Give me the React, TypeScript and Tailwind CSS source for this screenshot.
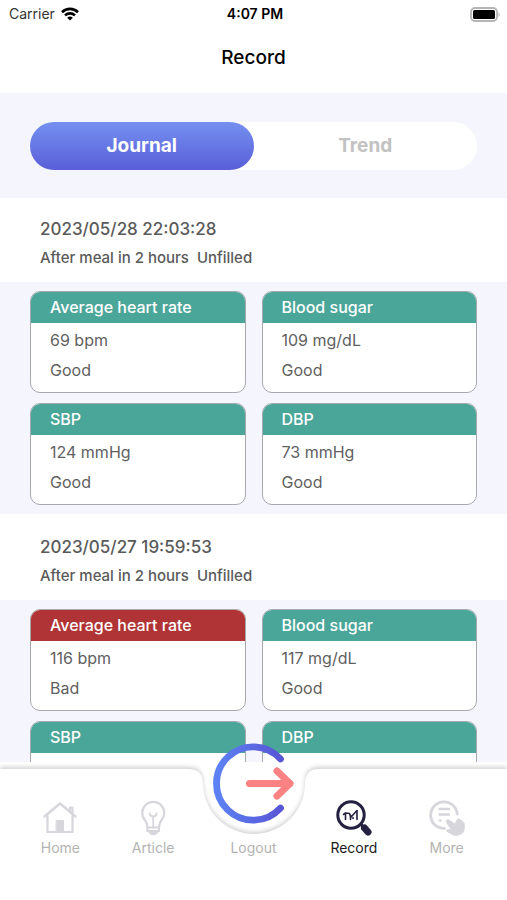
import { useState } from 'react';

type Reading = {
  label: string;
  value?: string;
  status?: 'Good' | 'Bad';
};

type Entry = {
  time: string;
  period: string;
  note: string;
  readings: Reading[];
};

const entries: Entry[] = [
  {
    time: '2023/05/28 22:03:28',
    period: 'After meal in 2 hours',
    note: 'Unfilled',
    readings: [
      { label: 'Average heart rate', value: '69 bpm', status: 'Good' },
      { label: 'Blood sugar', value: '109 mg/dL', status: 'Good' },
      { label: 'SBP', value: '124 mmHg', status: 'Good' },
      { label: 'DBP', value: '73 mmHg', status: 'Good' },
    ],
  },
  {
    time: '2023/05/27 19:59:53',
    period: 'After meal in 2 hours',
    note: 'Unfilled',
    readings: [
      { label: 'Average heart rate', value: '116 bpm', status: 'Bad' },
      { label: 'Blood sugar', value: '117 mg/dL', status: 'Good' },
      { label: 'SBP' },
      { label: 'DBP' },
    ],
  },
];

function WifiIcon() {
  return (
    <svg viewBox="0 0 18 14" className="w-[18px] h-3.5" fill="none" stroke="#000" strokeWidth="2.6">
      <path d="M1 5.2a11.4 11.4 0 0 1 16 0" />
      <path d="M4 8.4a7.2 7.2 0 0 1 10 0" />
      <path d="M9 13.6 6.2 10.8a4 4 0 0 1 5.6 0z" fill="#000" stroke="none" />
    </svg>
  );
}

function BatteryIcon() {
  return (
    <svg viewBox="0 0 31 15" className="w-[31px] h-[15px]" fill="none">
      <rect x="1" y="1" width="26" height="13" rx="4" stroke="#b5b5b5" strokeWidth="1.8" />
      <rect x="3" y="3" width="22" height="9" rx="1.5" fill="#000" />
      <path d="M28.5 5.2c1.6.6 1.6 4 0 4.6z" fill="#b5b5b5" />
    </svg>
  );
}

function HomeIcon() {
  return (
    <svg viewBox="0 0 36 36" className="w-9 h-9" fill="none" stroke="currentColor" strokeWidth="2.2" strokeLinejoin="round" strokeLinecap="round">
      <path d="M5.500 16v16h25V16" />
      <path d="M2.500 16.500 18 3.500l15.500 13" strokeWidth="2.4" />
      <path d="M28 11V7.500h2.500v6" />
      <path d="M14.500 20.500h7V32h-7z" fill="currentColor" strokeWidth="1" />
    </svg>
  );
}

function ArticleIcon() {
  return (
    <svg viewBox="0 0 36 36" className="w-9 h-9" fill="none" stroke="currentColor" strokeWidth="2.2" strokeLinejoin="round" strokeLinecap="round">
      <path d="M12.500 27.500c0-4.500-1.300-5.800-3-8A11 11 0 1 1 27 19.500c-1.700 2.200-3 3.500-3 8z" />
      <path d="M12.500 27.500v3.700h11.500v-3.700" />
      <path d="M15 32.200c.7 2.600 6 2.600 6.700 0z" fill="currentColor" />
      <path d="M18.200 27V16.500M14.800 13.500c.3 2 1.600 3 3.400 3s3.100-1 3.400-3" strokeWidth="1.8" />
    </svg>
  );
}

function RecordIcon() {
  return (
    <svg viewBox="0 0 38 36" className="w-[38px] h-9" fill="none" stroke="#23213f" strokeLinejoin="round" strokeLinecap="round">
      <circle cx="16" cy="15" r="13.2" strokeWidth="3" />
      <path d="m26 24.500 2.500 2.500" strokeWidth="3" />
      <path d="m29.500 28 3.500 4" strokeWidth="7" />
      <path d="M10.500 19.500v-5.500M15.500 19.500v-4M18 18.500v-1M22 19.500v-8.500" strokeWidth="1.6" />
      <path d="m8.500 14.500 2-1.500 4 .5 1.500 3.500 6-6.500" strokeWidth="1.6" />
    </svg>
  );
}

function MoreIcon() {
  return (
    <svg viewBox="0 0 36 36" className="w-9 h-9" fill="none" stroke="currentColor" strokeLinejoin="round" strokeLinecap="round">
      <path d="M15.500 28.400A13.300 13.300 0 1 1 28.200 14" strokeWidth="2.8" />
      <path d="M10.500 9h9.500M10.500 14.500h9.500" strokeWidth="2.4" />
      <path d="M11 20.500h.5" strokeWidth="2.4" />
      <path d="M17.200 21.500c-.4-1.500 1.200-2.600 2.600-1.700l6.200 4 1.500-3.300c.8-1.500 2-2.200 3.500-1.200l3.200 2.700c1.600 1.500 2 3 1.500 5.200l-1 3.800c-.5 1.800-1.500 2.800-3.200 3.200l-3.500 1.300c-1.300.5-2.600.3-3.700-.4l-5.800-3c-1.400-.9-.8-2.500.8-2.600l2.700-.1-4.300-6.500z" fill="currentColor" strokeWidth=".6" />
    </svg>
  );
}

function LogoutIcon() {
  return (
    <svg viewBox="0 0 84 84" className="w-[84px] h-[84px]" fill="none" strokeLinecap="round" strokeLinejoin="round">
      <defs>
        <linearGradient id="logoutRing" x1="0" y1="0" x2="1" y2="0">
          <stop offset="0" stopColor="#5c82f4" />
          <stop offset="1" stopColor="#5956d6" />
        </linearGradient>
      </defs>
      <path d="M68.500 18A36.700 36.700 0 1 0 68.500 67" stroke="url(#logoutRing)" strokeWidth="6.800" />
      <path d="M37.500 42.500H78M65 30l13 12.500L65 55" stroke="#fa8283" strokeWidth="7" />
    </svg>
  );
}

function ReadingCard({ reading }: { reading: Reading }) {
  return (
    <div className="h-[102px] bg-white border border-[#a9a9ad] rounded-[10px] overflow-hidden">
      <h3 className={`h-[31px] px-[19px] text-base leading-[30px] font-medium text-white ${reading.status === 'Bad' ? 'bg-[#b03335]' : 'bg-[#4ba69a]'}`}>
        {reading.label}
      </h3>
      <div className="px-[19px] pt-0.5 text-base leading-[30px] text-[#5f5f5f]">
        <p>{reading.value}</p>
        <p>{reading.status}</p>
      </div>
    </div>
  );
}

function NavBar() {
  const item = 'flex-1 flex flex-col items-center gap-0.5';

  return (
    <nav className="relative shrink-0 h-[138px] bg-white">
      {/* bar surface with the round notch in the middle */}
      <div className="absolute inset-x-0 top-[7px] bottom-0 flex drop-shadow-[0_-2px_2px_rgba(0,0,0,0.18)]">
        <div className="flex-1 bg-white" />
        <svg viewBox="0 0 131 131" className="w-[131px] h-[131px]" fill="#fff">
          <path d="M0 0c10 0 14 4 15 14a51 51 0 0 0 102 0c1-10 5-14 14-14v131H0z" />
        </svg>
        <div className="flex-1 bg-white" />
      </div>

      <div className="relative flex px-3.5 pt-[38px] text-sm leading-5 text-[#b3b3b3]">
        <a href="#home" className={item}>
          <span className="text-[#d6d6dc]"><HomeIcon /></span>
          Home
        </a>
        <a href="#article" className={item}>
          <span className="text-[#d6d6dc]"><ArticleIcon /></span>
          Article
        </a>
        <button type="button" className="relative w-[108px] pt-[38px] text-center">
          <span className="absolute left-3 -top-[59px]"><LogoutIcon /></span>
          Logout
        </button>
        <a href="#record" aria-current="page" className={`${item} text-[#1a1a1a]`}>
          <RecordIcon />
          Record
        </a>
        <a href="#more" className={item}>
          <span className="text-[#d6d6dc]"><MoreIcon /></span>
          More
        </a>
      </div>
    </nav>
  );
}

export default function App() {
  const [tab, setTab] = useState('journal');

  return (
    <div className="h-screen flex flex-col overflow-hidden bg-[#f4f5fd] font-[Inter,sans-serif]">
      <header className="shrink-0 h-[93px] bg-white text-black">
        <div className="grid grid-cols-3 items-center h-7 pl-[9px] pr-1.5 text-sm">
          <div className="flex items-center gap-1.5 text-[#333]">
            Carrier <WifiIcon />
          </div>
          <div className="text-center font-semibold">4:07 PM</div>
          <div className="flex justify-end"><BatteryIcon /></div>
        </div>
        <h1 className="pt-4 text-center text-[19px] leading-7 font-medium">Record</h1>
      </header>

      <div className="shrink-0 px-[30px] pt-[29px] pb-7">
        <div className="flex h-12 rounded-full bg-white text-[19px] font-bold">
          <button
            type="button"
            onClick={() => setTab('journal')}
            className={`flex-1 rounded-full ${tab === 'journal' ? 'bg-linear-to-b from-[#7590f0] to-[#5a5ed8] text-white' : 'text-[#c2c2c2]'}`}
          >
            Journal
          </button>
          <button
            type="button"
            onClick={() => setTab('trend')}
            className={`flex-1 rounded-full ${tab === 'trend' ? 'bg-linear-to-b from-[#7590f0] to-[#5a5ed8] text-white' : 'text-[#c2c2c2]'}`}
          >
            Trend
          </button>
        </div>
      </div>

      <main className="flex-1 min-h-0 overflow-hidden">
        {entries.map(entry => (
          <section key={entry.time} className="group">
            <div className="bg-white px-10 pt-5 pb-2 group-first:pt-[18px] text-[#5a5a5a] font-medium">
              <h2 className="text-[17px] leading-[26px]">{entry.time}</h2>
              <p className="flex gap-2 text-[15px] leading-8">
                <span>{entry.period}</span>
                <span>{entry.note}</span>
              </p>
            </div>
            <div className="grid grid-cols-2 gap-x-4 gap-y-2.5 px-[30px] py-[9px]">
              {entry.readings.map(reading => (
                <ReadingCard key={reading.label} reading={reading} />
              ))}
            </div>
          </section>
        ))}
      </main>

      <NavBar />
    </div>
  );
}
